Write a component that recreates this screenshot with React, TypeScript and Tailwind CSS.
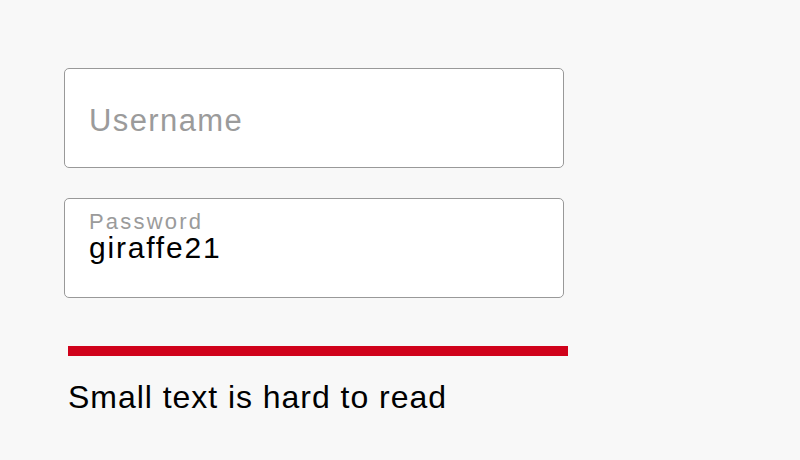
import React from 'react'

const font = { fontFamily: '"Liberation Sans", Arial, sans-serif' }

export default function App() {
  return (
    <div
      className="min-h-[460px] w-[800px] bg-[#f8f8f8] pl-[64px] pt-[68px]"
      style={font}
    >
      <div className="flex w-[500px] flex-col gap-[30px]">
        <div className="flex h-[100px] items-center rounded-[5px] border border-[#999999] bg-white px-[24px] pt-[6px]">
          <input
            type="text"
            placeholder="Username"
            className="w-full bg-transparent text-[31px] leading-none tracking-[0.045em] text-black outline-none placeholder:text-[#9b9b9b]"
          />
        </div>

        <label className="flex h-[100px] flex-col rounded-[5px] border border-[#999999] bg-white px-[24px] pt-[12px]">
          <span className="text-[22px] leading-[22px] tracking-[0.1em] text-[#9b9b9b]">Password</span>
          <input
            type="text"
            defaultValue="giraffe21"
            className="mt-[-2px] w-full bg-transparent text-[30px] leading-none tracking-[0.06em] text-black outline-none"
          />
        </label>
      </div>

      <div className="ml-[4px] mt-[48px] h-[10px] w-[500px] bg-[#d0021b]" />

      <p className="ml-[4px] mt-[25px] text-[32px] leading-none tracking-[0.03em] text-black">
        Small text is hard to read
      </p>
    </div>
  )
}
